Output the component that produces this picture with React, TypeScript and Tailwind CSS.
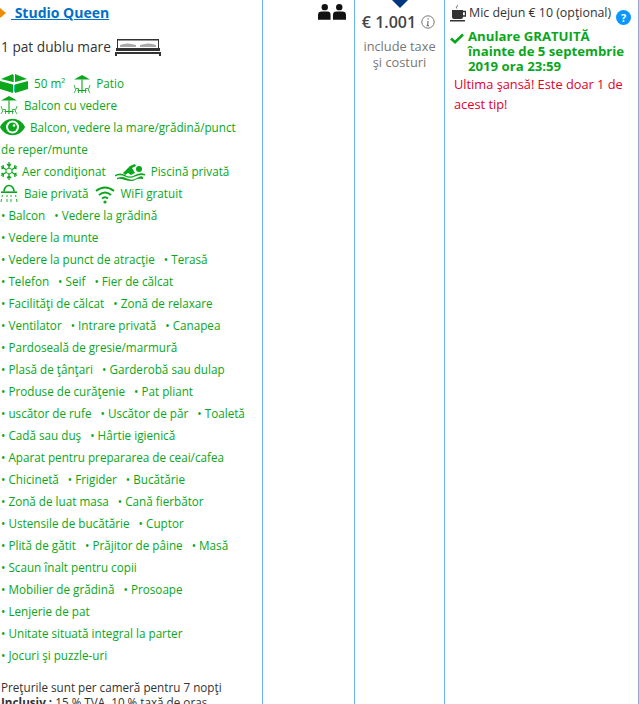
import React from "react";

const G = "#0aa61c";

const Cube = () => (
  <svg width="28" height="19" viewBox="0 0 28 19" className="inline-block shrink-0">
    <path d="M1 5 L13 0 V8 Z M15 0 L27 5 L15 8Z M0 7 L13 10.5 V19 L0 15Z M15 10.5 L28 7 V15 L15 19Z" fill="#0aa61c" />
    <path d="M13.5 1V8M14.5 11V18" stroke="#19c8b0" strokeWidth="1" />
  </svg>
);
const Patio = ({ w = 18 }: { w?: number }) => (
  <svg width={w} height="19" viewBox="0 0 18 19" fill="none" className="inline-block shrink-0">
    <path d="M9 0 L17 4.5 H1Z" fill={G} />
    <path d="M9 4.5V18M4.5 15.5H13.5" stroke={G} strokeWidth="1.1" />
    <path d="M1 10L2.8 15L1 18M3 13.5H5.5V18M17 10L15.2 15L17 18M15 13.5H12.5V18" stroke={G} strokeWidth="0.8" />
  </svg>
);
const Eye = () => (
  <svg width="25" height="18" viewBox="0 0 25 18" className="inline-block shrink-0">
    <path d="M0 9 C5 -2 20 -2 25 9 C20 20 5 20 0 9Z" fill={G} />
    <circle cx="12.5" cy="9" r="6.5" fill="#fff" />
    <circle cx="12.5" cy="9" r="4.5" fill={G} />
    <circle cx="14" cy="7.5" r="1.3" fill="#fff" />
  </svg>
);
const Snow = () => (
  <svg width="18" height="18" viewBox="0 0 18 18" stroke={G} strokeWidth="1.6" fill="none" className="inline-block shrink-0">
    <path d="M9 0V6M9 12V18M1 4.5L6 7.5M12 10.5L17 13.5M1 13.5L6 10.5M12 7.5L17 4.5M7 2L9 4L11 2M7 16L9 14L11 16M1.5 7L3.5 5.8L3 3M15 3L14.5 5.8L16.5 7M1.5 11L3.5 12.2L3 15M15 15L14.5 12.2L16.5 11" strokeWidth="1.3" />
    <path d="M9 6L12 7.5V10.5L9 12L6 10.5V7.5Z" strokeWidth="1" />
  </svg>
);
const Swim = () => (
  <svg width="30" height="18" viewBox="0 0 30 18" className="inline-block shrink-0" fill={G}>
    <circle cx="24" cy="5" r="3" />
    <path d="M8 9 L15 2 L20 0 L21 2 L17 4 L20 9 L16 11 L13 9 L10 11Z" />
    <path d="M0 11 Q5 8 10 11 T20 11 T30 10 V11.5 Q25 10 20 12.5 T10 12.5 T0 12.5Z M2 14 Q7 12 12 14.5 T22 14 T28 13.5 V15 Q23 14 20 16 T10 16 T2 15.5Z" />
  </svg>
);
const Shower = () => (
  <svg width="18" height="19" viewBox="0 0 18 19" className="inline-block shrink-0" fill="none">
    <path d="M4 7.5 A5 6 0 0 1 14 7.5" stroke={G} strokeWidth="1.7" />
    <path d="M1 8.2H17" stroke={G} strokeWidth="1.6" />
    <path d="M2.5 11L2 13M1.5 15L1 18M7 11V13M7 15V18M11 11V13M11 15V18M15.5 11L16 13M16.5 15L17 18" stroke={G} strokeWidth="0.9" />
  </svg>
);
const Wifi = () => (
  <svg width="20" height="18" viewBox="0 0 20 18" className="inline-block shrink-0" fill="none" stroke={G} strokeWidth="2">
    <path d="M1 5 Q10 -2 19 5M4 9 Q10 4 16 9M7 12.5 Q10 10 13 12.5" />
    <circle cx="10" cy="16" r="1.6" fill={G} stroke="none" />
  </svg>
);
const Bed = () => (
  <svg width="46" height="17" viewBox="0 0 46 17" className="inline-block shrink-0" fill="#333">
    <path d="M2 0H44V9H43V1.5H3V9H2Z" />
    <path d="M5 6 Q12 3 21 6 V8H5Z M25 6 Q34 3 41 6 V8H25Z" fill="#aaa" />
    <path d="M1 9H45V12H1Z M0 13H46V15H0Z M0 15H2V17H0Z M44 15H46V17H44Z" />
  </svg>
);
const Persons = () => (
  <svg width="28" height="17" viewBox="0 0 29 17" fill="#111" className="block">
    <circle cx="7" cy="4" r="3.3" />
    <path d="M0 17V12 Q0 8.5 4 8.5H10 Q13 8.5 13 12V17Z" />
    <circle cx="22" cy="4" r="3.3" />
    <path d="M15.5 17V12 Q15.5 8.5 19 8.5H25 Q29 8.5 29 12V17Z" />
  </svg>
);
const Cup = () => (
  <svg width="16" height="18" viewBox="0 0 16 18" fill="#333" className="inline-block shrink-0">
    <path d="M7 0 Q9 2 7 3 Q6 4 8 5 Q5 4 6 2.5 Q8 2 7 0Z" fill="#777" />
    <path d="M2 6H13V13 Q13 15 11 15H4 Q2 15 2 13Z" />
    <path d="M13 7.5H15.5V12H13" fill="none" stroke="#333" strokeWidth="1.3" />
    <path d="M0 16H15V17.5H0Z" />
  </svg>
);

const items: string[][] = [
  ["Balcon", "Vedere la grădină"],
  ["Vedere la munte"],
  ["Vedere la punct de atracţie", "Terasă"],
  ["Telefon", "Seif", "Fier de călcat"],
  ["Facilităţi de călcat", "Zonă de relaxare"],
  ["Ventilator", "Intrare privată", "Canapea"],
  ["Pardoseală de gresie/marmură"],
  ["Plasă de ţânţari", "Garderobă sau dulap"],
  ["Produse de curăţenie", "Pat pliant"],
  ["uscător de rufe", "Uscător de păr", "Toaletă"],
  ["Cadă sau duş", "Hârtie igienică"],
  ["Aparat pentru prepararea de ceai/cafea"],
  ["Chicinetă", "Frigider", "Bucătărie"],
  ["Zonă de luat masa", "Cană fierbător"],
  ["Ustensile de bucătărie", "Cuptor"],
  ["Plită de gătit", "Prăjitor de pâine", "Masă"],
  ["Scaun înalt pentru copii"],
  ["Mobilier de grădină", "Prosoape"],
  ["Lenjerie de pat"],
  ["Unitate situată integral la parter"],
  ["Jocuri şi puzzle-uri"],
];

const Row = ({ children }: { children: React.ReactNode }) => (
  <div className="flex h-[22px] items-center whitespace-nowrap">{children}</div>
);

export default function App() {
  return (
    <div className="flex h-[704px] w-[639px] overflow-hidden bg-white font-['Open_Sans','Liberation_Sans',sans-serif] text-[11.7px] leading-[22px] text-[#333]">
      <div className="w-[263px] shrink-0 border-r border-[#69b3f5] pl-px">
        <div className="-ml-px flex h-[26px] items-center">
          <span className="h-0 w-0 border-y-[5px] border-l-[6px] border-y-transparent border-l-[#f08c00]" />
          <a className="ml-[5px] text-[14px] font-bold text-[#0070c9] underline">&nbsp;Studio Queen</a>
        </div>
        <div className="mt-[7px] flex h-[28px] items-center gap-[4px] text-[13.7px]">
          <span>1 pat dublu mare</span>
          <Bed />
        </div>
        <div className="mt-[11px] -ml-px text-[#0aa61c]">
          <Row>
            <Cube />
            <span className="ml-[6px]">50 m²</span>
            <span className="ml-[8px]"><Patio /></span>
            <span className="ml-[5px]">Patio</span>
          </Row>
          <Row>
            <Patio />
            <span className="ml-[6px]">Balcon cu vedere</span>
          </Row>
          <Row>
            <Eye />
            <span className="ml-[5px]">Balcon, vedere la mare/grădină/punct</span>
          </Row>
          <Row><span className="pl-px">de reper/munte</span></Row>
          <Row>
            <Snow />
            <span className="ml-[4px]">Aer condiţionat</span>
            <span className="ml-[9px]"><Swim /></span>
            <span className="ml-[6px]">Piscină privată</span>
          </Row>
          <Row>
            <Shower />
            <span className="ml-[6px]">Baie privată</span>
            <span className="ml-[7px]"><Wifi /></span>
            <span className="ml-[5px]">WiFi gratuit</span>
          </Row>
          <div className="pl-px">
            {items.map((r, i) => (
              <Row key={i}>
                {r.map((t, j) => (
                  <span key={j} className={j ? "ml-[9px]" : ""}>• {t}</span>
                ))}
              </Row>
            ))}
          </div>
        </div>
        <div className="mt-[14px] leading-[15px] text-[#333]">
          <div>Preţurile sunt per cameră pentru 7 nopţi</div>
          <div><b>Inclusiv :</b> 15 % TVA, 10 % taxă de oraş</div>
        </div>
      </div>
      <div className="flex w-[92px] shrink-0 justify-end border-r border-[#69b3f5] pr-[8px] pt-[3px]">
        <Persons />
      </div>
      <div className="relative w-[90px] shrink-0 border-r border-[#69b3f5] pt-[11px] text-center">
        <span className="absolute left-[35px] top-[-2px] h-0 w-0 border-x-[10px] border-t-[10px] border-x-transparent border-t-[#003580]" />
        <div className="flex items-center justify-center gap-[5px] pr-[2px] text-[16px] font-semibold text-[#444]">
          <span>€ 1.001</span>
          <svg width="14" height="14" viewBox="0 0 14 14" fill="none">
            <circle cx="7" cy="7" r="6.2" stroke="#777" />
            <path d="M7.2 3.2V4.6M7 6L6.6 10.6M5.6 10.6H8" stroke="#777" strokeWidth="1.2" />
          </svg>
        </div>
        <div className="mt-[5px] text-[12.8px] leading-[16px] text-[#777]">include taxe<br />şi costuri</div>
      </div>
      <div className="relative flex-1 border-r border-[#69b3f5] pl-[5px] pt-[3px]">
        <div className="flex h-[20px] items-center gap-[3px] text-[12.4px] text-[#333]">
          <Cup />
          <span>Mic dejun € 10 (opţional)</span>
        </div>
        <span className="absolute right-[7px] top-[10px] flex h-[15px] w-[15px] items-center justify-center rounded-full bg-[#0896ff] text-[11px] font-bold leading-none text-white">?</span>
        <div className="mt-[6px] flex text-[13.2px] font-bold leading-[15px] text-[#0aa61c]">
          <svg width="14" height="11" viewBox="0 0 14 11" className="mt-[4px] shrink-0">
            <path d="M1 5.5L5 9.2L13 1.5" fill="none" stroke="#0aa61c" strokeWidth="2.6" />
          </svg>
          <div className="ml-[4px]">Anulare GRATUITĂ<br />înainte de 5 septembrie<br />2019 ora 23:59</div>
        </div>
        <div className="pl-[4px] text-[12.8px] leading-[20px] text-[#e0002b]">Ultima şansă! Este doar 1 de acest tip!</div>
      </div>
    </div>
  );
}
